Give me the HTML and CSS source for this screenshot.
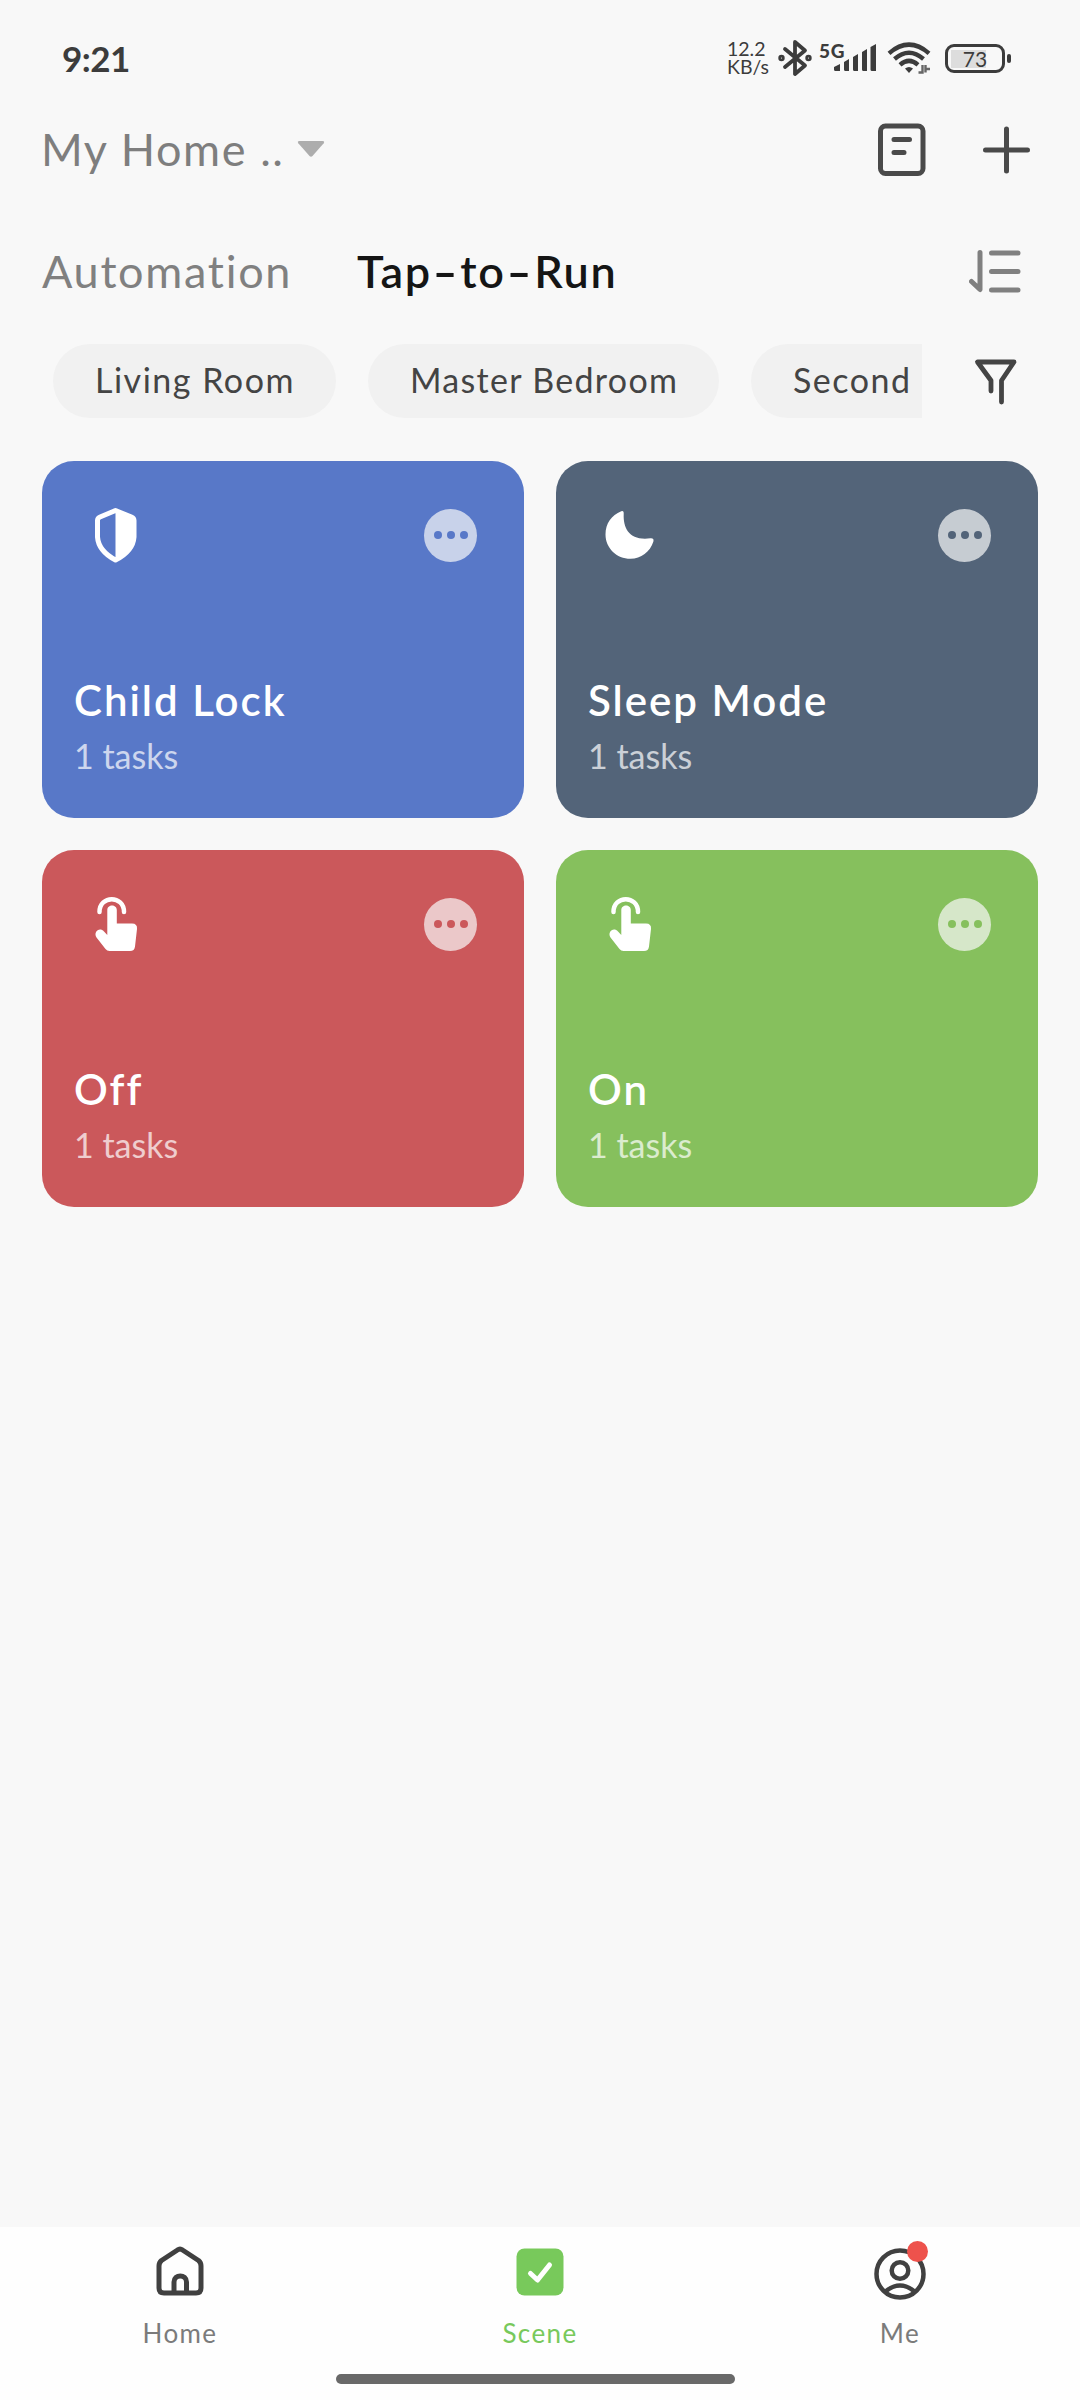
FILE: index.html
```html
<!DOCTYPE html>
<html lang="en">
<head>
    <meta charset="UTF-8">
    <meta name="viewport" content="width=device-width, initial-scale=1.0">
    <title>Scene</title>
    <link rel="stylesheet" href="styles.css">
</head>
<body>
    <div class="statusbar">
        <span class="clock">9:21</span>
        <div class="status-icons">
            <div class="netspeed"><span>12.2</span><span>KB/s</span></div>
            <svg class="bluetooth" width="34" height="38" viewBox="0 0 34 38" fill="none" stroke="#3c3c3c" stroke-width="3.8" stroke-linejoin="round" stroke-linecap="round">
                <path d="M7 10L27 26.500L17 35V3L27 11.500L7 28"/>
                <circle cx="3.500" cy="19" r="1.300"/>
                <circle cx="30.500" cy="19" r="1.300"/>
            </svg>
            <div class="cell">
                <span>5G</span>
                <svg width="44" height="30" viewBox="0 0 44 30" fill="#3c3c3c">
                    <path d="M1 24l6-3v7H2.500Q1 28 1 26.500zM11 19l5-3v12h-3.500Q11 28 11 26.500zM20 14l5-3v17h-3.500Q20 28 20 26.500zM29 9l5-3v22h-3.500Q29 28 29 26.500zM37.500 4l5.500-3v27h-4Q37.500 28 37.500 26.500z"/>
                </svg>
            </div>
            <svg class="wifi" width="44" height="34" viewBox="0 0 44 34" fill="none" stroke="#3c3c3c" stroke-width="4.400">
                <path d="M2 12.300Q22-5 42 12.300M7.500 18Q22 5.500 36.500 18M13 23.800Q22 16 31 23.800"/>
                <path d="M18 27.500Q22 24.500 26 27.500L22 32z" fill="#3c3c3c" stroke="none"/>
                <path d="M35.500 24v7.500h-4M38.500 31.500V24M38 28h5" stroke="#666" stroke-width="2.400"/>
            </svg>
            <div class="battery"><span>73</span></div>
        </div>
    </div>

    <header class="topbar">
        <div class="home-select">
            <span>My Home ..</span>
            <svg width="28" height="18" viewBox="0 0 28 18" fill="#adadad"><path d="M2.500 1h23q2.500 0 1.200 2.200L15.500 16q-1.500 1.500-3 0L1.300 3.200Q0 1 2.500 1z"/></svg>
        </div>
        <div class="topbar-actions">
            <svg width="48" height="54" viewBox="0 0 48 54" fill="none" stroke="#4a4a4a" stroke-width="5" stroke-linecap="round">
                <rect x="2.500" y="3" width="42.500" height="47.500" rx="5"/>
                <path d="M16 16.500h15.500M16 29.500h10"/>
            </svg>
            <svg width="48" height="48" viewBox="0 0 48 48" fill="none" stroke="#4a4a4a" stroke-width="5" stroke-linecap="round">
                <path d="M23.500 3v42M2.500 24h42"/>
            </svg>
        </div>
    </header>

    <div class="tabs">
        <span class="tab">Automation</span>
        <span class="tab active">Tap<span class="dash">-</span>to<span class="dash">-</span>Run</span>
        <svg class="sort" width="52" height="44" viewBox="0 0 52 44" fill="none" stroke="#808080" stroke-width="5" stroke-linecap="round" stroke-linejoin="round">
            <path d="M2.500 32.500l8.500 8V3.500M22.500 4H49M22.500 22.500H49M22.500 41H49"/>
        </svg>
    </div>

    <div class="filters">
        <div class="chips">
            <span class="chip living">Living Room</span>
            <span class="chip master">Master Bedroom</span>
            <span class="chip second">Second</span>
        </div>
        <svg class="funnel" width="44" height="48" viewBox="0 0 44 48" fill="none" stroke="#444" stroke-width="4.800" stroke-linecap="round" stroke-linejoin="round">
            <path d="M17 34V23.500L3.500 5H40L27.500 23.500V45"/>
        </svg>
    </div>

    <main class="scenes">
        <div class="card blue">
            <div class="card-top">
                <svg width="60" height="60" viewBox="0 0 60 60">
                    <path d="M30.500 5.500L46.500 12Q49 13 49 15.500V32Q48 46 30.500 55Q13.500 46 12.500 32V15.500Q12.500 13 15 12z" fill="none" stroke="#fff" stroke-width="5" stroke-linejoin="round"/>
                    <path d="M30.500 5.500L49 13.500V32Q48 46 30.500 55z" fill="#fff"/>
                </svg>
                <button class="more"><i></i><i></i><i></i></button>
            </div>
            <h2>Child Lock</h2>
            <p>1 tasks</p>
        </div>
        <div class="card slate">
            <div class="card-top">
                <svg width="60" height="60" viewBox="0 0 60 60" fill="#fff">
                    <path d="M22.200 6.200Q25 5.200 24.700 9C24 24 31 36 51.500 33.300Q55.200 33 54.400 36.500C51 47 42 53.800 31.500 53.800C17.500 53.800 6.500 43 6.500 29.500C6.500 18.500 12.500 10 22.200 6.200z"/>
                </svg>
                <button class="more"><i></i><i></i><i></i></button>
            </div>
            <h2>Sleep Mode</h2>
            <p>1 tasks</p>
        </div>
        <div class="card red">
            <div class="card-top">
                <svg width="60" height="60" viewBox="0 0 60 60" fill="#fff">
                    <path d="M14.500 18C14.500 1 39 1 39 18" fill="none" stroke="#fff" stroke-width="4.500" stroke-linecap="round"/>
                    <path d="M22.300 16c0-6 9.500-6 9.500 0v13.500H47q5.500 0 5 5.500l-2 17.500q-.5 4.500-5 4.500H24.500q-2.500 0-4-2L11.500 43.500C8 38 14.500 32.500 19 37.500l3.300 3.500z"/>
                </svg>
                <button class="more"><i></i><i></i><i></i></button>
            </div>
            <h2>Off</h2>
            <p>1 tasks</p>
        </div>
        <div class="card green">
            <div class="card-top">
                <svg width="60" height="60" viewBox="0 0 60 60" fill="#fff">
                    <path d="M14.500 18C14.500 1 39 1 39 18" fill="none" stroke="#fff" stroke-width="4.500" stroke-linecap="round"/>
                    <path d="M22.300 16c0-6 9.500-6 9.500 0v13.500H47q5.500 0 5 5.500l-2 17.500q-.5 4.500-5 4.500H24.500q-2.500 0-4-2L11.500 43.500C8 38 14.500 32.500 19 37.500l3.300 3.500z"/>
                </svg>
                <button class="more"><i></i><i></i><i></i></button>
            </div>
            <h2>On</h2>
            <p>1 tasks</p>
        </div>
    </main>

    <footer>
        <nav class="bottom-nav">
            <div class="nav-item">
                <svg width="56" height="56" viewBox="0 0 56 56" fill="none" stroke="#404040" stroke-width="5" stroke-linejoin="round">
                    <path d="M25.500 6Q28 4 30.500 6L46.500 16.500Q49 18.500 49 22V44Q49 49 44 49H12Q7 49 7 44V22Q7 18.500 9.500 16.500z"/>
                    <path d="M22 49V38c0-8 12.500-8 12.500 0v11"/>
                </svg>
                <span>Home</span>
            </div>
            <div class="nav-item selected">
                <svg width="56" height="56" viewBox="0 0 56 56">
                    <rect x="4.500" y="4.500" width="47" height="47" rx="8" fill="#78c95b"/>
                    <path d="M18.500 29.500l7 6.500L37.500 21" fill="none" stroke="#fff" stroke-width="5" stroke-linecap="round" stroke-linejoin="round"/>
                </svg>
                <span>Scene</span>
            </div>
            <div class="nav-item">
                <div class="me-icon">
                    <svg width="56" height="56" viewBox="0 0 56 56" fill="none" stroke="#404040" stroke-width="4.500">
                        <circle cx="28" cy="30" r="23.500"/>
                        <circle cx="28" cy="26.500" r="8.300"/>
                        <path d="M13.500 47.500Q28 35.500 42.500 47.500"/>
                    </svg>
                    <b class="badge"></b>
                </div>
                <span>Me</span>
            </div>
        </nav>
        <div class="gesture-bar"></div>
    </footer>
</body>
</html>
```
FILE: styles.css
```css
*{
    box-sizing: border-box;
}

body{
    margin: 0;
    height: 2400px;
    display: flex;
    flex-direction: column;
    background-color: #f8f8f8;
    font-family: Lato, "Open Sans", sans-serif;
    overflow: hidden;
}

svg{
    display: block;
    flex: none;
}

/* status bar */
.statusbar{
    height: 116px;
    padding: 0 69px 0 62px;
    display: flex;
    justify-content: space-between;
    align-items: center;
    color: #3c3c3c;
}

.clock{
    margin-top: -1px;
    font-size: 35px;
    font-weight: 700;
    letter-spacing: -.5px;
}

.status-icons{
    display: flex;
    align-items: center;
}

.netspeed{
    display: flex;
    flex-direction: column;
    width: 51px;
    font-size: 19.500px;
    line-height: 18.500px;
}

.cell{
    display: flex;
    align-items: center;
    margin-left: 7px;
}

.cell span{
    width: 14px;
    height: 38px;
    font-size: 19px;
    font-weight: 900;
    letter-spacing: .7px;
}

.wifi{
    margin-left: 10px;
}

.battery{
    position: relative;
    width: 60px;
    height: 29px;
    margin: 0 6px 0 14px;
    padding: 3px;
    border: 3px solid #3c3c3c;
    border-radius: 9px;
    font-size: 21px;
    line-height: 17px;
    text-align: center;
}

.battery span{
    display: block;
    height: 18px;
    background: linear-gradient(to right, #ddd 73%, transparent 73%);
}

.battery::after{
    content: "";
    position: absolute;
    right: -9px;
    top: 7px;
    width: 4px;
    height: 9px;
    border-radius: 2px;
    background-color: #3c3c3c;
}

/* home picker and actions */
.topbar{
    height: 67px;
    padding: 0 49px 0 41px;
    display: flex;
    justify-content: space-between;
    align-items: center;
}

.home-select{
    display: flex;
    align-items: center;
    gap: 12px;
    margin-top: -1px;
    font-size: 45px;
    letter-spacing: 1.600px;
    color: #7e7e7e;
}

.topbar-actions{
    display: flex;
    align-items: center;
    gap: 57px;
}

/* tabs */
.tabs{
    height: 62px;
    margin-top: 57px;
    padding: 0 59px 0 42px;
    display: flex;
    align-items: center;
}

.tab{
    width: 315px;
    font-size: 45px;
    letter-spacing: 1.700px;
    color: #808080;
    white-space: nowrap;
}

.tab.active{
    color: #151515;
    font-weight: 600;
}

.dash{
    display: inline-block;
    margin: 0 5px;
    transform: scaleX(1.5);
}

.sort{
    margin-left: auto;
}

/* room filter */
.filters{
    height: 74px;
    margin-top: 42px;
    padding: 0 62px 0 53px;
    display: flex;
    justify-content: space-between;
    align-items: center;
}

.chips{
    display: flex;
    gap: 32px;
    width: 869px;
    overflow: hidden;
}

.chip{
    flex: none;
    height: 74px;
    padding-left: 42px;
    border-radius: 37px;
    background-color: #f1f1f1;
    color: #444;
    font-size: 34px;
    line-height: 72px;
    letter-spacing: 1.500px;
    white-space: nowrap;
}

.living{
    width: 283px;
}

.master{
    width: 351px;
    letter-spacing: 1.300px;
}

.second{
    width: 240px;
}

/* scene cards */
.scenes{
    display: grid;
    grid-template-columns: 1fr 1fr;
    gap: 32px;
    margin-top: 43px;
    padding: 0 42px;
}

.card{
    height: 357px;
    padding: 44px 47px 0 32px;
    border-radius: 32px;
    color: #fff;
}

.card-top{
    display: flex;
    justify-content: space-between;
    align-items: center;
    padding-left: 11px;
}

.blue{
    background-color: #5878c8;
    --card: #5878c8;
}

.slate{
    background-color: #536479;
    --card: #536479;
}

.red{
    background-color: #cb585b;
    --card: #cb585b;
}

.green{
    background-color: #86c05d;
    --card: #86c05d;
}

.more{
    width: 53px;
    height: 53px;
    padding: 0;
    display: flex;
    justify-content: center;
    align-items: center;
    gap: 5px;
    border: none;
    border-radius: 50%;
    background-color: rgba(248, 248, 248, 0.7);
}

.more i{
    width: 8px;
    height: 8px;
    border-radius: 50%;
    background-color: var(--card);
}

.card h2{
    margin: 109px 0 0;
    font-size: 42px;
    font-weight: 600;
    line-height: 52px;
    letter-spacing: 2px;
}

.card p{
    margin: 9px 0 0;
    font-size: 34px;
    line-height: 42px;
    opacity: .7;
}

/* bottom navigation */
footer{
    height: 173px;
    margin-top: auto;
    background-color: #fefefe;
}

.bottom-nav{
    height: 147px;
    display: grid;
    grid-template-columns: repeat(3, 1fr);
}

.nav-item{
    padding-top: 17px;
    display: flex;
    flex-direction: column;
    align-items: center;
    font-size: 26px;
    letter-spacing: 1.400px;
    color: #7b7b7b;
}

.nav-item span{
    margin-top: 17px;
}

.nav-item.selected{
    color: #78c95b;
}

.me-icon{
    position: relative;
}

.badge{
    position: absolute;
    top: -3px;
    right: 0;
    width: 21px;
    height: 21px;
    border-radius: 50%;
    background-color: #ee524c;
}

.gesture-bar{
    width: 399px;
    height: 10px;
    margin-left: 336px;
    border-radius: 5px;
    background-color: #696969;
}
```
